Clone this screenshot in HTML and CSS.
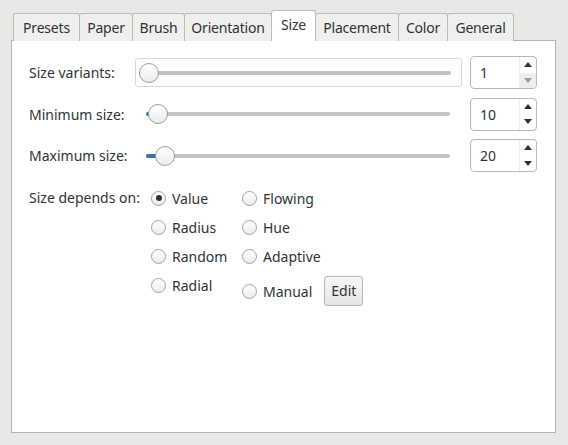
FILE: index.html
```html
<!DOCTYPE html>
<html>
<head>
<meta charset="utf-8">
<link rel="stylesheet" href="styles.css">
</head>
<body>
<div class="window">
  <div class="tabs">
    <div class="tab t-presets">Presets</div>
    <div class="tab t-paper">Paper</div>
    <div class="tab t-brush">Brush</div>
    <div class="tab t-orientation">Orientation</div>
    <div class="tab t-size active">Size</div>
    <div class="tab t-placement">Placement</div>
    <div class="tab t-color">Color</div>
    <div class="tab t-general">General</div>
  </div>
  <div class="panel">
    <div class="rows">
      <div class="row">
        <span class="label">Size variants:</span>
        <div class="slider framed">
          <div class="rail">
            <div class="track"></div>
            <div class="knob" style="left:0px"></div>
          </div>
        </div>
        <div class="spin">
          <span class="value">1</span>
          <div class="arrows">
            <span class="btn"><span class="up"></span></span>
            <span class="btn disabled"><span class="down"></span></span>
          </div>
        </div>
      </div>
      <div class="row">
        <span class="label">Minimum size:</span>
        <div class="slider">
          <div class="rail">
            <div class="track"></div>
            <div class="fill" style="width:12px"></div>
            <div class="knob" style="left:2px"></div>
          </div>
        </div>
        <div class="spin">
          <span class="value">10</span>
          <div class="arrows">
            <span class="btn"><span class="up"></span></span>
            <span class="btn"><span class="down"></span></span>
          </div>
        </div>
      </div>
      <div class="row">
        <span class="label">Maximum size:</span>
        <div class="slider">
          <div class="rail">
            <div class="track"></div>
            <div class="fill" style="width:19px"></div>
            <div class="knob" style="left:9px"></div>
          </div>
        </div>
        <div class="spin">
          <span class="value">20</span>
          <div class="arrows">
            <span class="btn"><span class="up"></span></span>
            <span class="btn"><span class="down"></span></span>
          </div>
        </div>
      </div>
    </div>
    <div class="depends">
      <span class="label">Size depends on:</span>
      <div class="col">
        <label class="radio"><span class="circle checked"></span>Value</label>
        <label class="radio"><span class="circle"></span>Radius</label>
        <label class="radio"><span class="circle"></span>Random</label>
        <label class="radio"><span class="circle"></span>Radial</label>
      </div>
      <div class="col">
        <label class="radio"><span class="circle"></span>Flowing</label>
        <label class="radio"><span class="circle"></span>Hue</label>
        <label class="radio"><span class="circle"></span>Adaptive</label>
        <div class="radio tall"><span class="circle"></span>Manual<span class="button">Edit</span></div>
      </div>
    </div>
  </div>
</div>
</body>
</html>
```

FILE: styles.css
```css
html, body {
  margin: 0;
  padding: 0;
}
body {
  background: #e8e8e7;
  font-family: "Noto Sans", "Open Sans", sans-serif;
  font-size: 14px;
  color: #2e3436;
}
.window {
  box-sizing: border-box;
  width: 568px;
  height: 445px;
  padding: 12px 12px 12px 11px;
  display: flex;
  flex-direction: column;
}
.tabs {
  display: flex;
  align-items: flex-end;
  height: 29px;
  padding-left: 3px;
  margin-bottom: -1px;
  position: relative;
  z-index: 1;
}
.tab {
  box-sizing: border-box;
  height: 28px;
  line-height: 27px;
  padding: 0;
  text-align: center;
  margin-left: -1px;
  background: #efefee;
  border: 1px solid #bcbcb9;
  border-bottom: none;
  border-radius: 3px 3px 0 0;
  white-space: nowrap;
  letter-spacing: -0.2px;
}
.t-presets { width: 67px; }
.t-paper { width: 54px; }
.t-brush { width: 53px; }
.t-orientation { width: 88px; }
.t-size { width: 45px; }
.t-placement { width: 84px; }
.t-color { width: 50px; }
.t-general { width: 67px; }
.tab.active {
  height: 31px;
  line-height: 28px;
  background: #ffffff;
  position: relative;
  z-index: 2;
}
.panel {
  flex: 1;
  background: #ffffff;
  border: 1px solid #b4b4b1;
  padding: 15px 18px 0 17px;
}
.rows {
  display: flex;
  flex-direction: column;
  gap: 8.5px;
}
.row {
  display: grid;
  grid-template-columns: 106px 1fr 67px;
  align-items: center;
  height: 33px;
}
.label {
  white-space: nowrap;
}
.slider {
  height: 29px;
  box-sizing: border-box;
  padding: 0 11px 0 10px;
  display: flex;
  align-items: center;
  margin-right: 8px;
  border: 1px solid transparent;
}
.slider.framed {
  border: 1px solid #dadad8;
  border-radius: 3px;
  padding: 0 10px 0 3px;
}
.rail {
  position: relative;
  flex: 1;
  height: 20px;
}
.track {
  position: absolute;
  left: 0;
  right: 0;
  top: 8px;
  height: 4px;
  border-radius: 2px;
  background: #c3c3c1;
}
.fill {
  position: absolute;
  left: 0;
  top: 8px;
  height: 4px;
  border-radius: 2px;
  background: #3c72b4;
}
.knob {
  position: absolute;
  top: 0;
  box-sizing: border-box;
  width: 20px;
  height: 20px;
  border-radius: 50%;
  border: 1px solid #9c9c99;
  background: linear-gradient(#ffffff, #ebebea);
}
.spin {
  box-sizing: border-box;
  height: 33px;
  border: 1px solid #b8b8b5;
  border-radius: 4px;
  display: flex;
  overflow: hidden;
}
.value {
  flex: 1;
  padding-left: 9px;
  line-height: 31px;
}
.arrows {
  width: 16px;
  display: flex;
  flex-direction: column;
  border-left: 1px solid #ececeb;
}
.btn {
  flex: 1;
  display: flex;
  align-items: center;
  justify-content: center;
}
.btn.disabled {
  background: #ededec;
}
.up {
  width: 0;
  height: 0;
  border-left: 4px solid transparent;
  border-right: 4px solid transparent;
  border-bottom: 5px solid #2e3436;
}
.down {
  width: 0;
  height: 0;
  border-left: 4px solid transparent;
  border-right: 4px solid transparent;
  border-top: 5px solid #2e3436;
}
.btn.disabled .down {
  border-top-color: #9a9c9c;
}
.depends {
  margin-top: 17px;
  display: grid;
  grid-template-columns: 122px 91px auto;
  align-items: start;
}
.depends .label {
  line-height: 18px;
}
.col {
  display: flex;
  flex-direction: column;
  gap: 11px;
}
.radio {
  display: flex;
  align-items: center;
  height: 18px;
  gap: 6px;
  white-space: nowrap;
}
.radio.tall {
  height: 30px;
}
.circle {
  box-sizing: border-box;
  width: 15px;
  height: 15px;
  border-radius: 50%;
  border: 1px solid #a3a3a0;
  background: linear-gradient(#ffffff, #ececeb);
  display: flex;
  align-items: center;
  justify-content: center;
  flex: none;
}
.circle.checked::after {
  content: "";
  width: 6px;
  height: 6px;
  border-radius: 50%;
  background: #2e3436;
}
.button {
  box-sizing: border-box;
  width: 39px;
  height: 30px;
  line-height: 28px;
  text-align: center;
  margin-left: 6px;
  border: 1px solid #b6b6b3;
  border-radius: 3px;
  background: linear-gradient(#f6f6f5, #e6e6e5);
}
```
